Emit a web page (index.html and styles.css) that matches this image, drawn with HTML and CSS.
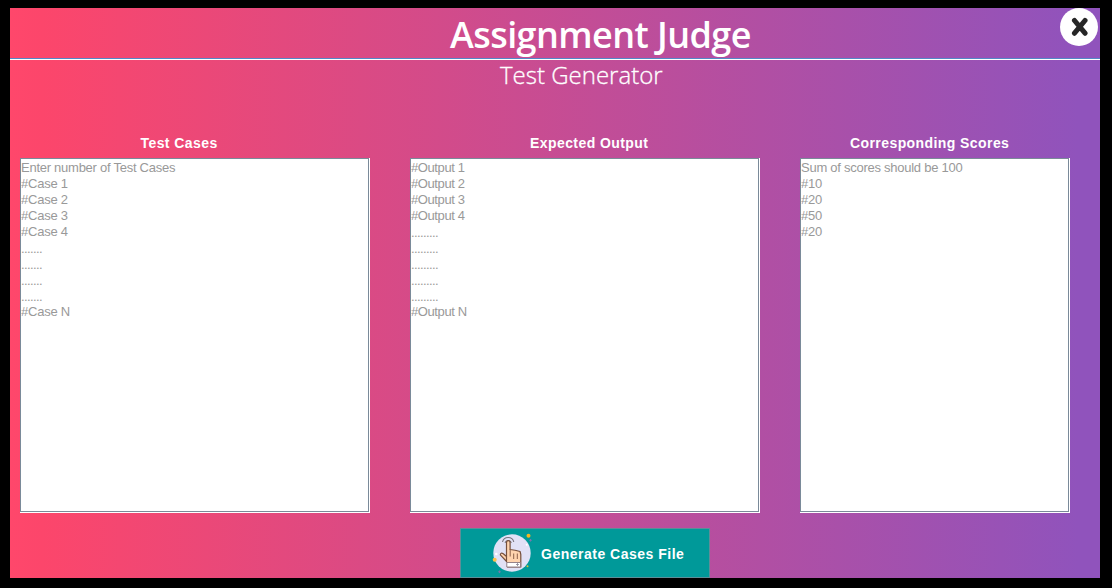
FILE: index.html
```
<!DOCTYPE html>
<html lang="en">
<head>
<meta charset="utf-8">
<title>Assignment Judge</title>
<link rel="stylesheet" href="styles.css">
</head>
<body>
<main class="window">
  <header class="header">
    <h1 class="title"><span>Assignment Judge</span></h1>
    <button class="close" aria-label="Close">
      <svg width="38" height="38" viewBox="0 0 38 38"><circle cx="19" cy="19" r="19" fill="#fff"/><path d="M14.500 12.500L25 25.200M25 12.500L14.500 25.200" stroke="#262626" stroke-width="5.100" stroke-linecap="round"/></svg>
    </button>
  </header>
  <h2 class="subtitle"><span>Test Generator</span></h2>
  <div class="columns">
    <section class="column">
      <h3 class="label label-cases">Test Cases</h3>
      <div class="area"><div class="text"><p class="intro">Enter number of Test Cases</p><p>#Case 1</p><p>#Case 2</p><p>#Case 3</p><p>#Case 4</p><p class="dots">.......</p><p class="dots">.......</p><p class="dots">.......</p><p class="dots">.......</p><p>#Case N</p></div></div>
    </section>
    <section class="column">
      <h3 class="label label-output">Expected Output</h3>
      <div class="area"><div class="text outputs"><p>#Output 1</p><p>#Output 2</p><p>#Output 3</p><p>#Output 4</p><p class="dots">.........</p><p class="dots">.........</p><p class="dots">.........</p><p class="dots">.........</p><p class="dots">.........</p><p>#Output N</p></div></div>
    </section>
    <section class="column">
      <h3 class="label label-scores">Corresponding Scores</h3>
      <div class="area"><div class="text"><p class="intro">Sum of scores should be 100</p><p>#10</p><p>#20</p><p>#50</p><p>#20</p></div></div>
    </section>
  </div>
  <button class="generate">
    <svg class="hand" width="40" height="42" viewBox="0 0 40 42">
      <circle cx="20" cy="21" r="18.700" fill="#e1e1f6"/>
      <path d="M10.500 10a5.800 5.800 0 0 1 11.300 0M13 10.700a3.400 3.400 0 0 1 6.400 0" fill="none" stroke="#77737c" stroke-width="1.100"/>
      <path d="M14.500 30V10.700q0-2 1.800-2t1.800 2V17.500q5 .3 10 2l.7 3V35H15.500V30.500L8.300 22.800q.3-2.500 3-1.100l3.200 2.800" fill="#ffd3ae" stroke="#76503e" stroke-width="1.200" stroke-linejoin="round"/>
      <path d="M18.200 17v7.500M21.700 21.500v5.500M25.300 21.500v5.500" fill="none" stroke="#8c6049" stroke-width="1"/>
      <path d="M14.800 30.500h13.700v4.500H14.800z" fill="#fff" stroke="#8b7780" stroke-width=".9"/>
      <path d="M25.500 31v3M24 32.500h3" stroke="#8b8795" stroke-width=".8"/>
      <circle cx="36.500" cy="3.700" r="2" fill="#f5b720"/>
      <circle cx="2.700" cy="27.700" r="2" fill="#ffc247"/>
      <circle cx="35.500" cy="34.300" r="1" fill="#dfc43c"/>
      <circle cx="4.300" cy="22" r="1.300" fill="#fff"/>
      <circle cx="34.700" cy="12.700" r="1" fill="#fff"/>
      <path d="M38.500 7v2.600M37.200 8.300h2.600M7.500 38.500v2.600M6.200 39.800h2.600" stroke="#7777ad" stroke-width="1"/>
    </svg>
    <span class="generate-text">Generate Cases File</span>
  </button>
</main>
</body>
</html>
```
FILE: styles.css
```
* { box-sizing: border-box; margin: 0; }
body {
  height: 588px;
  padding: 8px 12px 10px 10px;
  background: #000;
  overflow: hidden;
  font-family: "Liberation Sans", Arial, sans-serif;
}
.window {
  width: 1090px;
  height: 570px;
  background: linear-gradient(90deg, #ff476b 0%, #fc466b 3%, #9053bc 98%);
  display: flex;
  flex-direction: column;
}
.header {
  position: relative;
  height: 52px;
  border-bottom: 1px solid #fff;
  box-shadow: inset 0 -1px #5488c7;
  padding-left: 440px;
}
.title {
  font: 600 36px/54px "Open Sans", sans-serif;
  letter-spacing: -0.57px;
  color: #fff;
  white-space: nowrap;
}
.close {
  position: absolute;
  top: 0;
  right: 2px;
  width: 38px;
  height: 38px;
  padding: 0;
  border: 0;
  background: none;
}
.close svg { display: block; }
.subtitle {
  height: 68px;
  padding-left: 490px;
  font: 300 24px/30px "Open Sans", sans-serif;
  -webkit-text-stroke: 0.3px #fff;
  color: #fff;
  white-space: nowrap;
}
.columns {
  display: grid;
  grid-template-columns: 350px 350px 270px;
  gap: 40px;
  padding-left: 10px;
}
.label {
  height: 30px;
  font: bold 14px/30px "Liberation Sans", Arial, sans-serif;
  letter-spacing: 0.42px;
  color: #fff;
  white-space: nowrap;
}
.label-cases { padding-left: 120.5px; }
.label-output { padding-left: 120px; }
.label-scores { padding-left: 50px; }
.area {
  height: 355px;
  background: #fff;
  padding: 0 1px 1px 0;
}
.text {
  height: 354px;
  border: 1px solid #7a8a99;
  padding-top: 1px;
  color: #999;
  font-size: 13px;
  line-height: 16px;
  letter-spacing: -0.22px;
  white-space: nowrap;
}
.outputs { letter-spacing: -0.4px; }
.text .intro { letter-spacing: -0.26px; }
.text .dots {
  letter-spacing: -0.61px;
  padding-top: 1px;
  height: 16px;
}
.generate {
  display: flex;
  align-items: center;
  width: 250px;
  height: 50px;
  margin: 15px 0 0 450px;
  padding: 0 0 0 31px;
  border: 1px solid #5d8e98;
  background: #009999;
  color: #fff;
  font: bold 14px/20px "Liberation Sans", Arial, sans-serif;
  letter-spacing: 0.5px;
  white-space: nowrap;
}
.hand { flex: none; }
.generate-text { margin-left: 9px; padding-top: 2px; }
```
